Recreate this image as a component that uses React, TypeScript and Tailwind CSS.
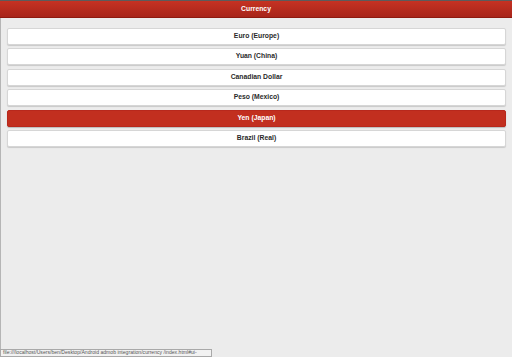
import React from "react";

const currencies = [
  { name: "Euro (Europe)" },
  { name: "Yuan (China)" },
  { name: "Canadian Dollar" },
  { name: "Peso (Mexico)" },
  { name: "Yen (Japan)", active: true },
  { name: "Brazil (Real)" },
];

const App = () => {
  return (
    <div className="relative h-[357px] w-[512px] overflow-hidden bg-[#ececec] font-['Liberation_Sans',Arial,sans-serif]">
      <div className="h-[18px] border-t border-[#5b5b5b] border-b border-b-[#8e1a10] bg-gradient-to-b from-[#c53222] to-[#a8251a] flex items-center justify-center">
        <p className="text-[6.8px] font-bold text-white leading-none">Currency</p>
      </div>
      <div className="h-[339px] border-l border-[#b5b5b5]">
        <div className="px-[6px] pt-[10px] flex flex-col gap-[3.4px]">
          {currencies.map((item, index) => (
            <div
              key={index}
              className={
                item.active
                  ? "h-[17px] rounded-[2px] border border-[#b8281c] bg-[#c22f1f] shadow-[0_1px_1px_rgba(0,0,0,0.2)] flex items-center justify-center"
                  : "h-[17px] rounded-[2px] border border-[#d6d6d6] bg-white shadow-[0_1px_1px_rgba(0,0,0,0.15)] flex items-center justify-center"
              }
            >
              <p
                className={
                  item.active
                    ? "text-[6.8px] font-bold text-white leading-none"
                    : "text-[6.8px] font-bold text-[#2a2a2a] leading-none"
                }
              >
                {item.name}
              </p>
            </div>
          ))}
        </div>
      </div>
      <div className="absolute left-0 bottom-0 h-[8px] w-[212px] border border-[#a9a9a9] bg-[#f2f2f2] flex items-center px-[2px]">
        <p className="text-[5.1px] text-[#555] leading-none whitespace-nowrap">
          file:///localhost/Users/ben/Desktop/Android admob integration/currency /index.html#ui-
        </p>
      </div>
    </div>
  );
};

export default App;
